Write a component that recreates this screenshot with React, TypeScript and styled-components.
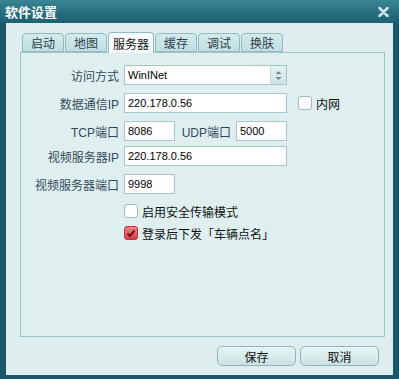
import React from 'react';
import styled, { createGlobalStyle } from 'styled-components';

const GlobalStyle = createGlobalStyle`
  html, body {
    margin: 0;
    padding: 0;
    background: #1d5a6b;
  }
  body {
    font-family: "Liberation Sans", "Noto Sans CJK SC", sans-serif;
    font-size: 12px;
  }
`;

const Window = styled.div`
  width: 399px;
  height: 379px;
  display: flex;
  flex-direction: column;
  background: #1b5668;
  overflow: hidden;
`;

const TitleBar = styled.div`
  height: 23px;
  flex: 0 0 23px;
  display: flex;
  align-items: center;
  justify-content: space-between;
  padding: 0 10px 0 5px;
  background: linear-gradient(#3a8696, #27707f 50%, #1d6171);
  color: #ffffff;
`;

const Title = styled.span`
  font-family: "Noto Sans CJK SC", sans-serif;
  font-weight: bold;
  font-size: 13px;
`;

const Body = styled.div`
  flex: 1;
  margin: 0 6px 4px 6px;
  background: #deeeee;
  display: flex;
  flex-direction: column;
  padding: 8px 8px 0 14px;
`;

const TabBar = styled.div`
  display: flex;
  align-items: flex-end;
  height: 21px;
  padding-left: 2px;
`;

const Tab = styled.div<{ active?: boolean }>`
  font-family: "Noto Sans CJK SC", sans-serif;
  font-size: 12px;
  color: ${({ active }) => (active ? '#111' : '#2c3e4c')};
  height: ${({ active }) => (active ? '21px' : '19px')};
  padding: 0 ${({ active }) => (active ? '4px' : '8px')};
  margin-right: 1px;
  display: flex;
  align-items: center;
  justify-content: center;
  box-sizing: border-box;
  border: 1px solid #8fbcc2;
  border-bottom: ${({ active }) => (active ? 'none' : '1px solid #8fbcc2')};
  border-radius: 4px 4px 0 0;
  background: ${({ active }) =>
    active ? '#f7fbfb' : 'linear-gradient(#d5ebeb, #c0dfe0)'};
  position: relative;
  z-index: ${({ active }) => (active ? 2 : 1)};
  margin-bottom: ${({ active }) => (active ? '-1px' : '0')};
`;

const Panel = styled.div`
  height: 285px;
  border: 1px solid #9fc3c6;
  background: #dfeeee;
  box-sizing: border-box;
  padding: 12px 0 0 0;
  display: flex;
  flex-direction: column;
`;

const Row = styled.div<{ top?: number }>`
  display: flex;
  align-items: center;
  height: 20px;
  margin-top: ${({ top }) => top ?? 0}px;
`;

const Label = styled.span<{ w?: number }>`
  width: ${({ w }) => w ?? 103}px;
  text-align: right;
  padding-right: 5px;
  box-sizing: border-box;
  flex: 0 0 auto;
  color: #334a5c;
  font-family: "Liberation Sans", "Noto Sans CJK SC", sans-serif;
  font-size: 12px;
  white-space: nowrap;
`;

const Input = styled.div<{ w: number }>`
  width: ${({ w }) => w}px;
  height: 20px;
  box-sizing: border-box;
  background: #ffffff;
  border: 1px solid #a7c6c9;
  display: flex;
  align-items: center;
  padding-left: 3px;
  color: #000;
  font-family: "Liberation Sans", sans-serif;
  font-size: 11px;
`;

const Select = styled(Input)`
  justify-content: space-between;
  padding-right: 0;
`;

const Spin = styled.div`
  width: 15px;
  height: 18px;
  background: linear-gradient(#e6f2f2, #cfe4e5);
  border-left: 1px solid #c6dcdd;
  display: flex;
  align-items: center;
  justify-content: center;
`;

const Box = styled.div<{ checked?: boolean }>`
  width: 14px;
  height: 14px;
  box-sizing: border-box;
  border: 1px solid ${({ checked }) => (checked ? '#b8323e' : '#9fbcc0')};
  border-radius: 3px;
  background: ${({ checked }) =>
    checked ? 'linear-gradient(#f27d86, #d6404d)' : '#ffffff'};
  display: flex;
  align-items: center;
  justify-content: center;
  flex: 0 0 auto;
`;

const CheckText = styled.span`
  margin-left: 4px;
  color: #111;
  font-family: "Noto Sans CJK SC", sans-serif;
  font-size: 12px;
  white-space: nowrap;
`;

const Indent = styled.div`
  width: 103px;
  flex: 0 0 auto;
`;

const Footer = styled.div`
  display: flex;
  justify-content: flex-end;
  gap: 4px;
  padding: 9px 6px 0 0;
`;

const Button = styled.div`
  width: 79px;
  height: 20px;
  box-sizing: border-box;
  border: 1px solid #8fb5ba;
  border-radius: 5px;
  background: linear-gradient(#eaf5f5, #c9e2e3);
  display: flex;
  align-items: center;
  justify-content: center;
  color: #111;
  font-family: "Noto Sans CJK SC", sans-serif;
  font-size: 12px;
`;

const tabs = ['启动', '地图', '服务器', '缓存', '调试', '换肤'];

export default function App() {
  return (
    <>
      <GlobalStyle />
      <Window>
        <TitleBar>
          <Title>软件设置</Title>
          <svg width="11" height="10" viewBox="0 0 11 10">
            <path d="M1.5 1 L9.5 9 M9.5 1 L1.5 9" stroke="#cfe6ea" strokeWidth="2.6" strokeLinecap="round" />
          </svg>
        </TitleBar>
        <Body>
          <TabBar>
            {tabs.map((t) => (
              <Tab key={t} active={t === '服务器'}>
                {t}
              </Tab>
            ))}
          </TabBar>
          <Panel>
            <Row>
              <Label>访问方式</Label>
              <Select w={163}>
                <span>WinINet</span>
                <Spin>
                  <svg width="7" height="11" viewBox="0 0 7 11">
                    <path d="M0.5 4 L3.5 1 L6.5 4 Z M0.5 7 L3.5 10 L6.5 7 Z" fill="#6b8a92" />
                  </svg>
                </Spin>
              </Select>
            </Row>
            <Row top={8}>
              <Label>数据通信IP</Label>
              <Input w={163}>220.178.0.56</Input>
              <Box style={{ marginLeft: 11 }} />
              <CheckText>内网</CheckText>
            </Row>
            <Row top={8}>
              <Label>TCP端口</Label>
              <Input w={51}>8086</Input>
              <Label w={61}>UDP端口</Label>
              <Input w={51}>5000</Input>
            </Row>
            <Row top={5}>
              <Label>视频服务器IP</Label>
              <Input w={163}>220.178.0.56</Input>
            </Row>
            <Row top={8}>
              <Label>视频服务器端口</Label>
              <Input w={51}>9998</Input>
            </Row>
            <Row top={7}>
              <Indent />
              <Box />
              <CheckText>启用安全传输模式</CheckText>
            </Row>
            <Row top={2}>
              <Indent />
              <Box checked>
                <svg width="10" height="9" viewBox="0 0 10 9">
                  <path d="M1.5 4.5 L4 7 L8.5 1.5" stroke="#7a0f18" strokeWidth="2" fill="none" />
                </svg>
              </Box>
              <CheckText>登录后下发「车辆点名」</CheckText>
            </Row>
          </Panel>
          <Footer>
            <Button>保存</Button>
            <Button>取消</Button>
          </Footer>
        </Body>
      </Window>
    </>
  );
}
